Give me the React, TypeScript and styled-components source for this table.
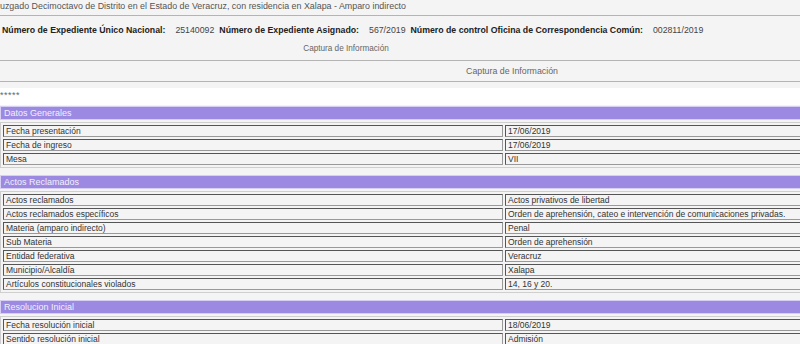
import { FC } from 'react'
import styled, { createGlobalStyle } from 'styled-components'

const GlobalStyle = createGlobalStyle`
   html, body {
      margin: 0;
      padding: 0;
      background: #f4f4f4;
      overflow: hidden;
   }
   body {
      font-family: 'Liberation Sans', Arial, sans-serif;
      font-size: 9px;
      color: #333;
   }
`

interface Section {
   title: string
   rows: [string, string][]
}

const sections: Section[] = [
   {
      title: 'Datos Generales',
      rows: [
         ['Fecha presentación', '17/06/2019'],
         ['Fecha de ingreso', '17/06/2019'],
         ['Mesa', 'VII'],
      ],
   },
   {
      title: 'Actos Reclamados',
      rows: [
         ['Actos reclamados', 'Actos privativos de libertad'],
         ['Actos reclamados específicos', 'Orden de aprehensión, cateo e intervención de comunicaciones privadas.'],
         ['Materia (amparo indirecto)', 'Penal'],
         ['Sub Materia', 'Orden de aprehensión'],
         ['Entidad federativa', 'Veracruz'],
         ['Municipio/Alcaldía', 'Xalapa'],
         ['Artículos constitucionales violados', '14, 16 y 20.'],
      ],
   },
   {
      title: 'Resolucion Inicial',
      rows: [
         ['Fecha resolución inicial', '18/06/2019'],
         ['Sentido resolución inicial', 'Admisión'],
      ],
   },
]

const App: FC = () => {
   return (
      <Page>
         <GlobalStyle />
         <Court>uzgado Decimoctavo de Distrito en el Estado de Veracruz, con residencia en Xalapa - Amparo indirecto</Court>
         <Numbers>
            <NumberLine>
               <Label>Número de Expediente Único Nacional:</Label>
               <Value>25140092</Value>
               <Label>Número de Expediente Asignado:</Label>
               <Value>567/2019</Value>
               <Label>Número de control Oficina de Correspondencia Común:</Label>
               <Value>002811/2019</Value>
            </NumberLine>
            <Caption $center={346} $size={8.2}>
               Captura de Información
            </Caption>
         </Numbers>
         <SubBar>
            <Caption $center={512} $size={8.8}>
               Captura de Información
            </Caption>
         </SubBar>
         <Stars>*****</Stars>
         {sections.map(s => (
            <Block key={s.title}>
               <SectionHead>{s.title}</SectionHead>
               <Table>
                  <tbody>
                     {s.rows.map(([k, v]) => (
                        <tr key={k}>
                           <KeyCell>{k}</KeyCell>
                           <Cell>{v}</Cell>
                        </tr>
                     ))}
                  </tbody>
               </Table>
            </Block>
         ))}
      </Page>
   )
}

const Page = styled.div`
   width: 800px;
   height: 344px;
   overflow: hidden;
   background: #f4f4f4;
`

const Court = styled.div`
   height: 15px;
   line-height: 12px;
   font-size: 8.9px;
   color: #555;
   border-bottom: 1px solid #b4b4b4;
   white-space: nowrap;
`

const Numbers = styled.div`
   height: 44px;
   border-bottom: 1px solid #b4b4b4;
   display: flex;
   flex-direction: column;
`

const NumberLine = styled.div`
   display: flex;
   align-items: center;
   padding: 8px 0 0 2px;
   height: 12px;
   font-size: 8.75px;
   white-space: nowrap;
`

const Label = styled.span`
   font-weight: bold;
   color: #222;
   margin-right: 10px;
`

const Value = styled.span`
   color: #444;
   margin-right: 5px;
`

const Caption = styled.div<{ $center: number; $size: number }>`
   flex-shrink: 0;
   width: ${p => p.$center * 2}px;
   text-align: center;
   font-size: ${p => p.$size}px;
   color: #666;
   line-height: 12px;
   margin-top: 7px;
   white-space: nowrap;
`

const SubBar = styled.div`
   height: 20px;
   border-bottom: 1px solid #b4b4b4;
   display: flex;
   align-items: flex-start;
   overflow: hidden;

   ${Caption} {
      margin-top: 4px;
   }
`

const Stars = styled.div`
   margin-top: 6px;
   height: 17px;
   background: #fff;
   line-height: 14px;
   color: #666;
   letter-spacing: 0.5px;
`

const Block = styled.div`
   margin-bottom: 7px;
`

const SectionHead = styled.div`
   height: 12px;
   line-height: 12px;
   margin: 1px 0 2px;
   padding-left: 3px;
   background: #9c89e2;
   border: 1px solid #d6cff3;
   border-right: none;
   color: #f2f0fa;
`

const Table = styled.table`
   width: 1010px;
   table-layout: fixed;
   border-collapse: separate;
   border-spacing: 2px;
   margin-left: 0;
   border: 1px solid #cfcfcf;
   border-right: none;
   font-size: 8.5px;
`

const Cell = styled.td`
   height: 10px;
   padding: 0 0 0 2px;
   line-height: 10px;
   border: 1px solid #555;
   border-right-color: #999;
   border-bottom-color: #999;
   background: #f4f4f4;
   color: #333;
   white-space: nowrap;
   overflow: hidden;
`

const KeyCell = styled(Cell)`
   width: 496px;
`

export default App
